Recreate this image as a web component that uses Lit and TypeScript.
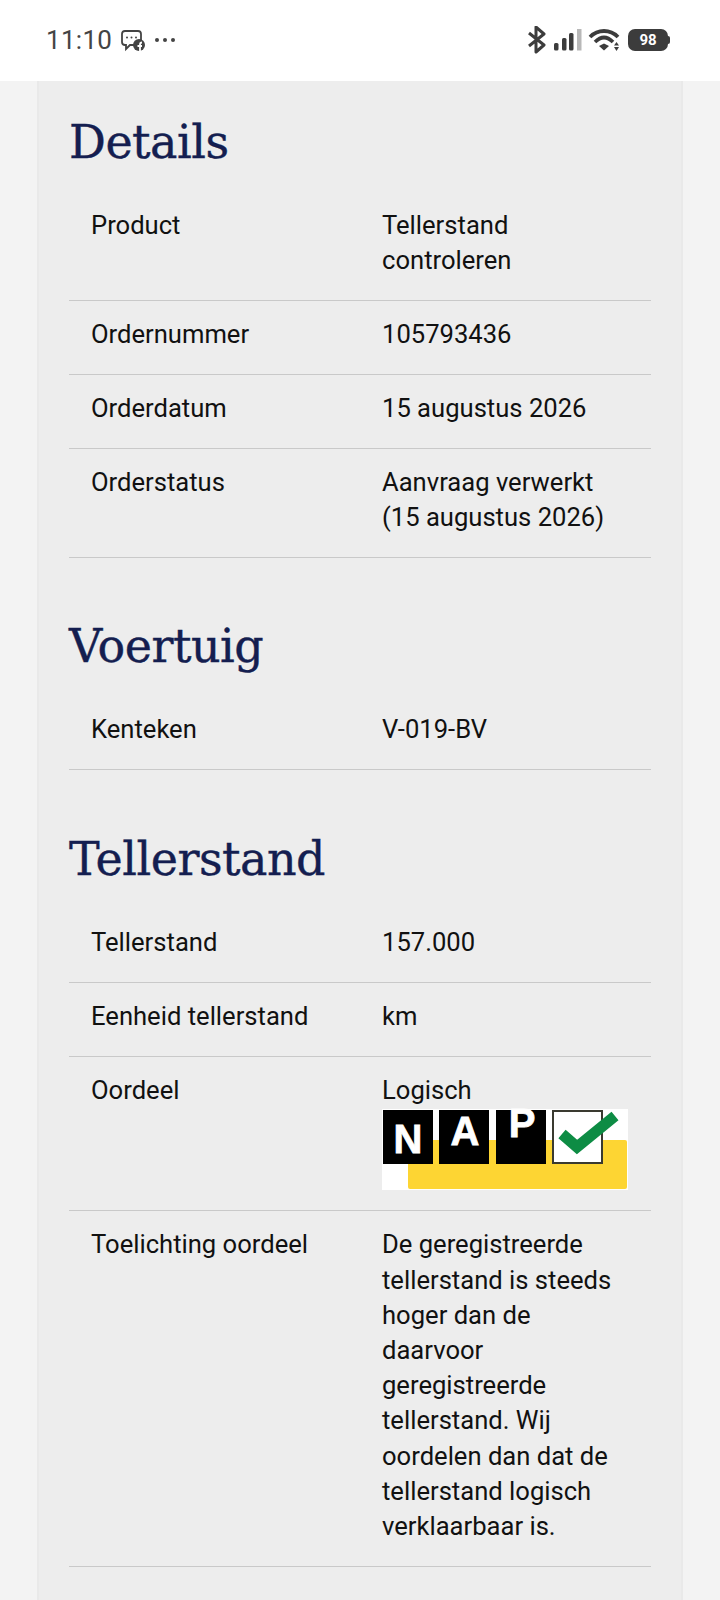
import { LitElement, css, html, svg } from 'lit';
import { customElement } from 'lit/decorators.js';

const napLogo = html`
  <svg class="nap" width="246" height="81" viewBox="0 0 246 81">
    <rect width="246" height="81" fill="#fff" />
    <rect x="26" y="31" width="219" height="49" rx="2" fill="#fdd533" />
    <rect x="1" y="1" width="50" height="54" fill="#000" />
    <rect x="57" y="1" width="50" height="54" fill="#000" />
    <rect x="114" y="1" width="50" height="54" fill="#000" />
    <rect x="171" y="2" width="49" height="52" fill="#fff" stroke="#3a3a30" stroke-width="2" />
    <text x="26" y="44" class="nap-letter">N</text>
    <text x="83" y="36" class="nap-letter">A</text>
    <text x="140" y="28" class="nap-letter">P</text>
    <path d="M180 25 L195 38 L233 7" fill="none" stroke="#0d8c44" stroke-width="11" />
  </svg>
`;

const statusIcons = svg`
  <svg width="96" height="28" viewBox="0 0 96 28">
    <path d="M3 7 L18 19 L10 26 L10 1 L18 8 L3 20" fill="none" stroke="#3c3c3c" stroke-width="3" stroke-linejoin="round" />
    <rect x="28" y="17" width="4.5" height="7.5" rx="1.5" fill="#3c3c3c" />
    <rect x="36" y="12" width="4.5" height="12.5" rx="1.5" fill="#3c3c3c" />
    <rect x="43" y="7" width="4.5" height="17.5" rx="1.5" fill="#3c3c3c" />
    <rect x="51" y="3" width="4.5" height="21.5" fill="#b8b8b8" />
    <path d="M64 11 C72 3 84 3 92 11" fill="none" stroke="#3c3c3c" stroke-width="3.8" />
    <path d="M69 16 C75 10 81 10 87 16" fill="none" stroke="#3c3c3c" stroke-width="3.6" />
    <path d="M73 20 L78 17.5 L83 20 L78 24.5 Z" fill="#3c3c3c" />
    <path d="M88 19.5 L90.5 16 L93 19.5 Z M88 21 L93 21 L90.5 25 Z" fill="#3c3c3c" />
  </svg>
`;

const sections = [
  {
    title: 'Details',
    rows: [
      ['Product', 'Tellerstand controleren'],
      ['Ordernummer', '105793436'],
      ['Orderdatum', '15 augustus 2026'],
      ['Orderstatus', 'Aanvraag verwerkt (15 augustus 2026)'],
    ],
  },
  {
    title: 'Voertuig',
    rows: [['Kenteken', 'V-019-BV']],
  },
  {
    title: 'Tellerstand',
    rows: [
      ['Tellerstand', '157.000'],
      ['Eenheid tellerstand', 'km'],
      ['Oordeel', 'Logisch'],
      ['Toelichting oordeel', 'De geregistreerde tellerstand is steeds hoger dan de daarvoor geregistreerde tellerstand. Wij oordelen dan dat de tellerstand logisch verklaarbaar is.'],
    ],
  },
];

@customElement('app-root')
export class AppRoot extends LitElement {
  static styles = css`
    :host {
      display: block;
      height: 1600px;
      overflow: hidden;
      background: #f3f3f3;
      font-family: Roboto, sans-serif;
      color: #111;
    }

    .status {
      height: 81px;
      box-sizing: border-box;
      padding: 20px 52px 0 46px;
      background: #fff;
      display: flex;
      align-items: flex-start;
      gap: 9px;
    }

    .time {
      font-size: 26px;
      line-height: 41px;
      color: #444;
      letter-spacing: 0.3px;
    }

    .notif {
      margin-top: 10px;
    }

    .dots {
      margin-left: -1px;
    }

    .right {
      margin-left: auto;
      display: flex;
      align-items: center;
      height: 40px;
      gap: 6px;
    }

    .battery {
      position: relative;
      width: 40px;
      height: 22px;
      border-radius: 7px;
      background: #3c3c3c;
      color: #fff;
      font-size: 15px;
      font-weight: 700;
      line-height: 22px;
      text-align: center;
    }

    .battery::after {
      content: '';
      position: absolute;
      right: -2px;
      top: 7px;
      width: 2px;
      height: 8px;
      border-radius: 0 2px 2px 0;
      background: #3c3c3c;
    }

    .card {
      margin: 0 37px;
      height: 1519px;
      box-sizing: border-box;
      padding: 0 30px;
      background: #ededed;
      border-left: 2px solid #e9e9e9;
      border-right: 2px solid #e9e9e9;
    }

    h2 {
      margin: 0;
      padding-top: 31px;
      height: 111px;
      box-sizing: border-box;
      font-family: 'DejaVu Serif', serif;
      font-weight: 400;
      font-size: 46px;
      line-height: 60px;
      letter-spacing: -0.5px;
      -webkit-text-stroke: 0.4px #141e50;
      color: #141e50;
    }

    section + section h2 {
      padding-top: 58px;
      height: 138px;
    }

    section + section + section h2 {
      padding-top: 59px;
      height: 139px;
    }

    .row {
      display: grid;
      grid-template-columns: 291px 1fr;
      padding: 16px 22px 21.8px;
      border-bottom: 1px solid #c9c9c9;
      font-size: 25.6px;
      line-height: 35.2px;
    }

    .nap {
      display: block;
      margin: 0 0 -1px;
      overflow: visible;
    }

    .nap-letter {
      font-family: 'Liberation Sans', sans-serif;
      font-weight: 700;
      font-size: 40px;
      fill: #fff;
      stroke: #fff;
      stroke-width: 0.8px;
      text-anchor: middle;
    }
  `;

  render() {
    return html`
      <div class="status">
        <span class="time">11:10</span>
        <svg class="notif" width="24" height="22" viewBox="0 0 24 22">
          <path d="M4 1 H17 Q20 1 20 4 V12 Q20 15 17 15 H9 L5 19 V15 H4 Q1 15 1 12 V4 Q1 1 4 1 Z" fill="none" stroke="#444" stroke-width="1.8" />
          <circle cx="6" cy="7.5" r="1" fill="#444" />
          <circle cx="10.5" cy="7.5" r="1" fill="#444" />
          <circle cx="15" cy="7.5" r="1" fill="#444" />
          <circle cx="18" cy="15" r="6" fill="#444" />
          <path d="M19 21 V14.5 Q19 12.5 21 12.5 M16.5 16 H21" fill="none" stroke="#fff" stroke-width="1.8" />
        </svg>
        <svg class="notif dots" width="24" height="22" viewBox="0 0 24 22">
          <circle cx="4" cy="10" r="2" fill="#444" />
          <circle cx="12" cy="10" r="2" fill="#444" />
          <circle cx="20" cy="10" r="2" fill="#444" />
        </svg>
        <div class="right">
          ${statusIcons}
          <span class="battery">98</span>
        </div>
      </div>
      <div class="card">
        ${sections.map(
          (s) => html`
            <section>
              <h2>${s.title}</h2>
              ${s.rows.map(
                ([label, value]) => html`
                  <div class="row">
                    <div>${label}</div>
                    <div>${value}${label === 'Oordeel' ? napLogo : ''}</div>
                  </div>
                `,
              )}
            </section>
          `,
        )}
      </div>
    `;
  }
}
